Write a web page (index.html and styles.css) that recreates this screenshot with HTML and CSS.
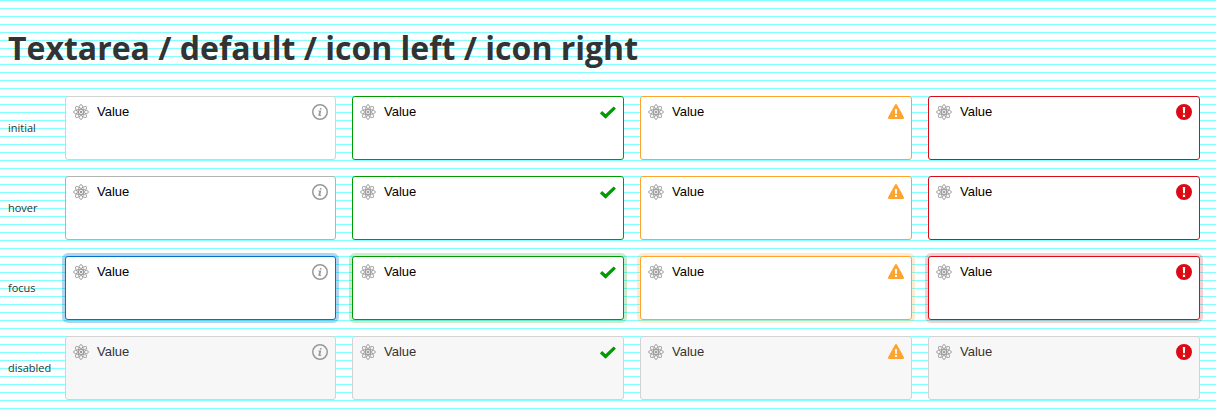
FILE: index.html
```
<!DOCTYPE html>
<html lang="en">
<head>
<meta charset="utf-8">
<title>Textarea</title>
<link rel="stylesheet" href="styles.css">
</head>
<body>
<svg class="sprite" aria-hidden="true">
  <symbol id="atom" viewBox="0 0 16 16">
    <g fill="none" stroke="currentColor" stroke-width=".9">
      <ellipse cx="8" cy="8" rx="7.5" ry="2.5"/>
      <ellipse cx="8" cy="8" rx="7.5" ry="2.5" transform="rotate(45 8 8)"/>
      <ellipse cx="8" cy="8" rx="7.5" ry="2.5" transform="rotate(90 8 8)"/>
      <ellipse cx="8" cy="8" rx="7.5" ry="2.5" transform="rotate(135 8 8)"/>
    </g>
    <circle cx="8" cy="8" r="1.3" fill="currentColor"/>
  </symbol>
  <symbol id="info" viewBox="0 0 16 16">
    <circle cx="8" cy="8" r="7.25" fill="none" stroke="currentColor" stroke-width="1.5"/>
    <path d="M8.1 3.9h1.6l-.3 1.5H7.8zM6.5 6.5h2.7L8.3 10.9h1l-.2 1H6.3l.9-4.5h-.9z" fill="currentColor"/>
  </symbol>
  <symbol id="check" viewBox="0 0 16 16">
    <path d="M1 8.2 5.5 12.5 14.8 3.6" fill="none" stroke="currentColor" stroke-width="3.3"/>
  </symbol>
  <symbol id="warning" viewBox="0 0 16 16">
    <path fill="currentColor" fill-rule="evenodd" d="M6.8 .9q1.2-1.8 2.4 0l6.6 12.2q.6 1.9-1 1.9H1.2q-1.6 0-1-1.9zM6.9 5l.2 5h1.8L9.1 5zM7 11v2h2v-2z"/>
  </symbol>
  <symbol id="error" viewBox="0 0 16 16">
    <path fill="currentColor" fill-rule="evenodd" d="M8 0a8 8 0 1 1 0 16A8 8 0 0 1 8 0zM6.8 3l.3 6.3h1.8l.3-6.3zM6.9 10.7v2.2h2.2v-2.2z"/>
  </symbol>
</svg>
<h1 class="title">Textarea / default / icon left / icon right</h1>
<main class="rows">
  <section class="row">
    <span class="label">initial</span>
    <div class="field"><svg class="icon"><use href="#atom"/></svg><span class="value">Value</span><svg class="icon"><use href="#info"/></svg></div>
    <div class="field success"><svg class="icon"><use href="#atom"/></svg><span class="value">Value</span><svg class="icon status"><use href="#check"/></svg></div>
    <div class="field warning"><svg class="icon"><use href="#atom"/></svg><span class="value">Value</span><svg class="icon status"><use href="#warning"/></svg></div>
    <div class="field error"><svg class="icon"><use href="#atom"/></svg><span class="value">Value</span><svg class="icon status"><use href="#error"/></svg></div>
  </section>
  <section class="row hover">
    <span class="label">hover</span>
    <div class="field"><svg class="icon"><use href="#atom"/></svg><span class="value">Value</span><svg class="icon"><use href="#info"/></svg></div>
    <div class="field success"><svg class="icon"><use href="#atom"/></svg><span class="value">Value</span><svg class="icon status"><use href="#check"/></svg></div>
    <div class="field warning"><svg class="icon"><use href="#atom"/></svg><span class="value">Value</span><svg class="icon status"><use href="#warning"/></svg></div>
    <div class="field error"><svg class="icon"><use href="#atom"/></svg><span class="value">Value</span><svg class="icon status"><use href="#error"/></svg></div>
  </section>
  <section class="row focus">
    <span class="label">focus</span>
    <div class="field"><svg class="icon"><use href="#atom"/></svg><span class="value">Value</span><svg class="icon"><use href="#info"/></svg></div>
    <div class="field success"><svg class="icon"><use href="#atom"/></svg><span class="value">Value</span><svg class="icon status"><use href="#check"/></svg></div>
    <div class="field warning"><svg class="icon"><use href="#atom"/></svg><span class="value">Value</span><svg class="icon status"><use href="#warning"/></svg></div>
    <div class="field error"><svg class="icon"><use href="#atom"/></svg><span class="value">Value</span><svg class="icon status"><use href="#error"/></svg></div>
  </section>
  <section class="row disabled">
    <span class="label">disabled</span>
    <div class="field"><svg class="icon"><use href="#atom"/></svg><span class="value">Value</span><svg class="icon"><use href="#info"/></svg></div>
    <div class="field success"><svg class="icon"><use href="#atom"/></svg><span class="value">Value</span><svg class="icon status"><use href="#check"/></svg></div>
    <div class="field warning"><svg class="icon"><use href="#atom"/></svg><span class="value">Value</span><svg class="icon status"><use href="#warning"/></svg></div>
    <div class="field error"><svg class="icon"><use href="#atom"/></svg><span class="value">Value</span><svg class="icon status"><use href="#error"/></svg></div>
  </section>
</main>
</body>
</html>
```
FILE: styles.css
```
* { box-sizing: border-box; }
body {
  margin: 0;
  height: 416px;
  padding: 24px 16px 0 8px;
  overflow: hidden;
  background: repeating-linear-gradient(#7fffff 0 1px, #fff 1px 8px);
  font-family: "Open Sans", sans-serif;
  color: #333;
}
.sprite { display: none; }
.title {
  margin: 0 0 24px;
  font-size: 32px;
  line-height: 48px;
  font-weight: 700;
}
.rows { display: grid; gap: 16px; }
.row {
  display: grid;
  grid-template-columns: 41px 271px repeat(3, 272px);
  column-gap: 16px;
  height: 64px;
  align-items: center;
}
.label { font-size: 11px; line-height: 16px; white-space: nowrap; }
.field {
  --accent: #d3d3d3;
  --glow: #006fc84d;
  display: flex;
  align-items: flex-start;
  gap: 8px;
  height: 64px;
  padding: 7px;
  border: 1px solid var(--accent);
  border-radius: 3px;
  background: #fff;
}
.success { --accent: #009b00; --tone: #009b00; --glow: #009b0033; }
.warning { --accent: #ffa330; --tone: #ffa330; --glow: #ffa33038; }
.error { --accent: #dc0a14; --tone: #dc0a14; --glow: #dc0a1433; }
.icon { width: 16px; height: 16px; flex: none; color: #999; }
.status { color: var(--tone); }
.value {
  flex: 1;
  font: 13px/16px "Liberation Sans", Arial, sans-serif;
  color: #000;
}
.hover .field:not(.success, .warning, .error) { --accent: #b3b3b3; }
.focus .field { box-shadow: 0 0 0 3px var(--glow); }
.focus .field:not(.success, .warning, .error) { --accent: #0073c8; }
.disabled .field { border-color: #d3d3d3; background: #f7f7f7; }
.disabled .value { color: #333; }
```
